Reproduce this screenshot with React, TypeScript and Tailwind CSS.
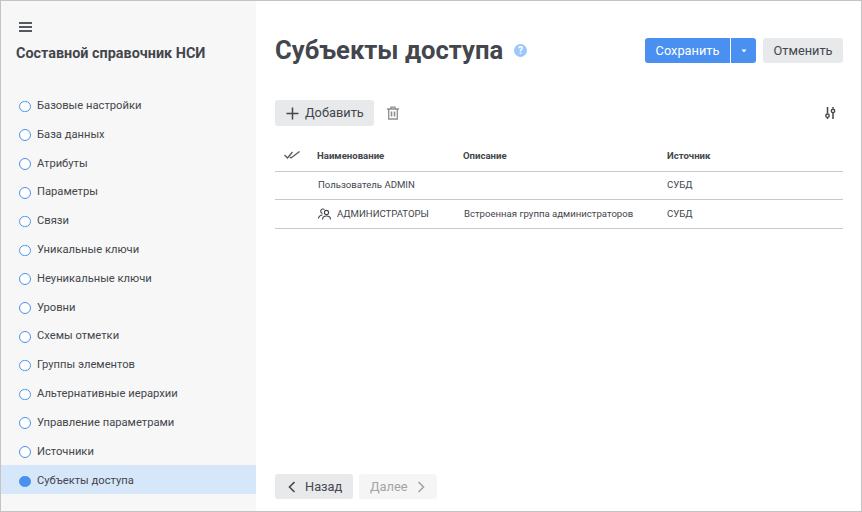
import React from "react";

const items = ["Базовые настройки","База данных","Атрибуты","Параметры","Связи","Уникальные ключи","Неуникальные ключи","Уровни","Схемы отметки","Группы элементов","Альтернативные иерархии","Управление параметрами","Источники","Субъекты доступа"];

export default function App() {
  return (
    <div className="w-[862px] h-[512px] flex border border-[#c4c4c4] bg-white overflow-hidden text-[#43464c] font-['Roboto',sans-serif]">
      <aside className="w-[255px] shrink-0 bg-[#f7f7f7] flex flex-col">
        <div className="ml-[18px] mt-[20px] h-[12px] w-[13px] flex flex-col justify-between py-[1px]">
          <div className="h-[2px] bg-[#55585d]" />
          <div className="h-[2px] bg-[#55585d]" />
          <div className="h-[2px] bg-[#55585d]" />
        </div>
        <div className="ml-[15px] mt-[9px] text-[14.4px] leading-[24px] font-bold">Составной справочник НСИ</div>
        <nav className="mt-[25px] flex flex-col">
          {items.map((t, i) => {
            const active = i === items.length - 1;
            return (
              <div key={t} className={`h-[28.8px] flex items-center pl-[18px] text-[11.2px] ${active ? "bg-[#d7e7fa] pt-[3px]" : "pt-[2px]"}`}>
                <span className={`w-[11.5px] h-[11.5px] rounded-full border border-[#4a90f0] mr-[6.5px] shrink-0 ${active ? "bg-[#4a90f0]" : "bg-white"}`} />
                <span>{t}</span>
              </div>
            );
          })}
        </nav>
      </aside>
      <main className="flex-1 flex flex-col pl-[19px] pr-[18px]">
        <header className="mt-[28px] h-[42px] flex items-center">
          <h1 className="text-[25.6px] leading-[42px] font-bold">Субъекты доступа</h1>
          <span className="ml-[11px] mt-[1px] w-[13px] h-[13px] rounded-full bg-[#9cc7f8] text-white text-[10px] leading-[13px] font-bold text-center">?</span>
          <div className="ml-auto mt-[1px] flex items-center">
            <button className="h-[25px] w-[85px] bg-[#4a90f0] text-white text-[12.8px] rounded-l-[3px]">Сохранить</button>
            <button className="ml-[1px] h-[25px] w-[25px] bg-[#4a90f0] rounded-r-[3px] flex items-center justify-center">
              <svg width="6" height="4" viewBox="0 0 6 4"><path d="M0.5 0.5h5L3 3.5z" fill="#fff" /></svg>
            </button>
            <button className="ml-[7px] h-[25px] w-[80px] bg-[#e8e9eb] text-[12.8px] rounded-[3px]">Отменить</button>
          </div>
        </header>
        <div className="mt-[29px] h-[26px] flex items-center">
          <button className="h-[26px] w-[99px] bg-[#e8e9eb] rounded-[3px] flex items-center pl-[11px] text-[12.8px]">
            <svg width="13" height="13" viewBox="0 0 13 13" className="mr-[6px]"><path d="M6.5 0.5v12M0.5 6.5h12" stroke="#43464c" strokeWidth="1.5" /></svg>
            Добавить
          </button>
          <svg width="14" height="14" viewBox="0 0 14 14" className="ml-[12px]" fill="none" stroke="#8c8e91" strokeWidth="1.3">
            <path d="M1 3h12M5 3V1.200h4V3M2.700 3v10h8.600V3" />
            <path d="M5.500 5.500v5M8.500 5.500v5" strokeWidth="1.600" />
          </svg>
          <svg width="12" height="14" viewBox="0 0 12 14" className="ml-auto mr-[7px]" fill="none" stroke="#43464c" strokeWidth="1.500">
            <path d="M3.500 1v6.500M3.500 11.500V13M9 1v1.500M9 7v6" />
            <circle cx="3.500" cy="9.700" r="1.700" strokeWidth="1.400" />
            <circle cx="9" cy="4.900" r="1.700" strokeWidth="1.400" />
          </svg>
        </div>
        <div className="mt-[16px] text-[9.6px]">
          <div className="h-[30px] grid grid-cols-[42px_146px_204px_1fr] items-center font-bold border-b border-[#c8c8c8]">
            <svg width="17" height="8" viewBox="0 0 17 8" className="ml-[9px] -mt-[3px]" fill="none" stroke="#55585d" strokeWidth="1.300">
              <path d="M0.500 4l3 3 5-6M6 6l1 1 8.500-6.500" />
            </svg>
            <span>Наименование</span><span>Описание</span><span>Источник</span>
          </div>
          <div className="h-[28px] grid grid-cols-[43px_146px_203px_1fr] items-center border-b border-[#c8c8c8]">
            <span /><span>Пользователь ADMIN</span><span /><span>СУБД</span>
          </div>
          <div className="h-[29px] grid grid-cols-[43px_146px_203px_1fr] items-center border-b border-[#c8c8c8]">
            <span />
            <span className="flex items-center">
              <svg width="13" height="12" viewBox="0 0 13 12" className="mr-[6px]" fill="none" stroke="#43464c" strokeWidth="1.100">
                <circle cx="8.500" cy="4.500" r="2.100" />
                <path d="M4.500 11.500c0-2 1.700-3.500 4-3.500s4 1.500 4 3.500" />
                <path d="M6.500 1.500a2.300 2.300 0 1 0-2 4M4.500 7c-2.300 0-4 1.700-4 3.500" />
              </svg>
              АДМИНИСТРАТОРЫ
            </span>
            <span>Встроенная группа администраторов</span><span>СУБД</span>
          </div>
        </div>
        <div className="mt-auto mb-[12px] flex">
          <button className="h-[25px] w-[78px] bg-[#e8e9eb] rounded-[3px] flex items-center pl-[13px] text-[12.8px]">
            <svg width="8" height="12" viewBox="0 0 8 12" className="mr-[9px]" fill="none" stroke="#43464c" strokeWidth="1.600"><path d="M6.500 1L1.500 6l5 5" /></svg>
            Назад
          </button>
          <button className="ml-[6px] h-[25px] w-[78px] bg-[#f5f5f5] rounded-[3px] flex items-center pl-[11px] text-[12.8px] text-[#a3a4a6]">
            Далее
            <svg width="8" height="12" viewBox="0 0 8 12" className="ml-[9px]" fill="none" stroke="#a3a4a6" strokeWidth="1.600"><path d="M1.500 1l5 5-5 5" /></svg>
          </button>
        </div>
      </main>
    </div>
  );
}
